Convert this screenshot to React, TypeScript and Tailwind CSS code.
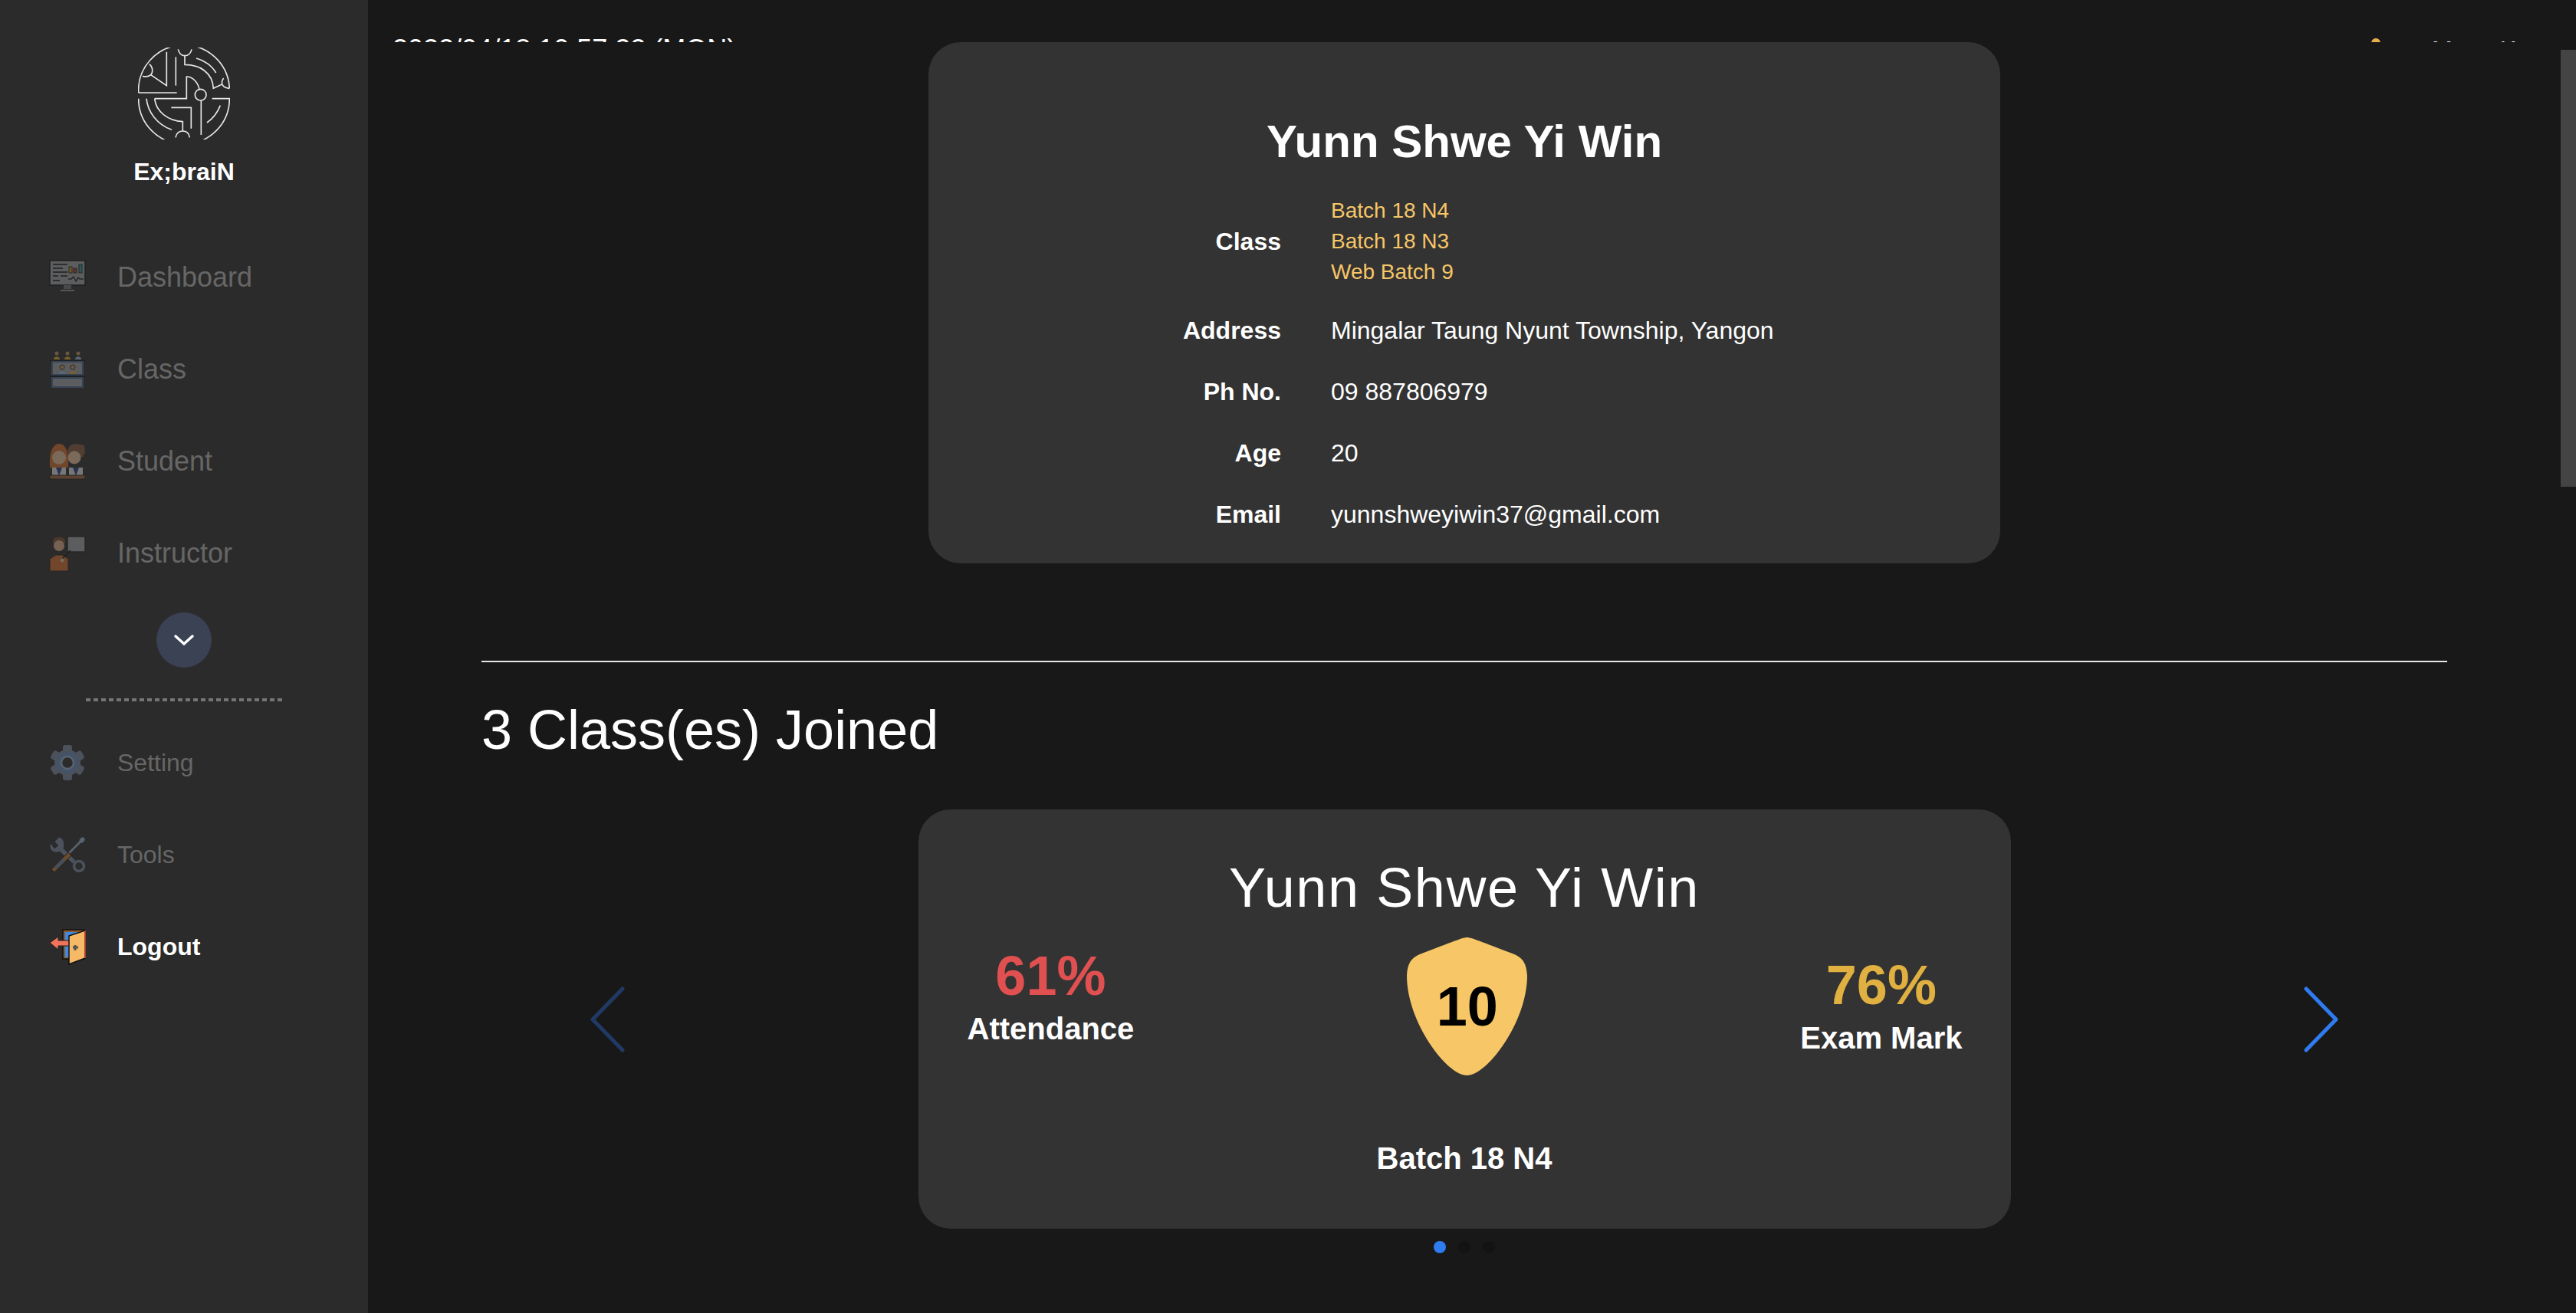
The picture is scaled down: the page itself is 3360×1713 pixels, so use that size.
import React from 'react';

const Logo = () => (
    <svg viewBox="120 68 360 360" className="w-[120px] h-[120px]" fill="none" stroke="#e6e6e6" strokeWidth="5">
        <path d="M122 245 A178 178 0 0 1 478 228 M122 245 H272" />
        <path d="M122 268 A178 178 0 0 0 478 268 H410" />
        <path d="M165 133 C182 150 178 172 165 178 C155 183 145 182 138 180" />
        <path d="M170 175 L232 217 V85" />
        <path d="M268 105 V217" />
        <path d="M277 75 C282 95 292 100 303 100 C315 100 326 92 330 75" />
        <path d="M303 100 V135 C360 135 412 165 415 228 L447 213" />
        <path d="M455 188 C442 205 447 224 478 228" />
        <path d="M348 110 C380 118 410 140 425 167" />
        <path d="M185 268 H310 V182 C335 182 355 205 360 232" />
        <circle cx="365" cy="253" r="22" />
        <path d="M367 275 V410" />
        <path d="M185 268 C190 320 240 355 295 358 V395" />
        <path d="M267 420 C270 405 280 395 295 395 C310 395 320 405 322 420" />
        <path d="M250 303 H328 V385" />
        <path d="M153 268 C158 320 195 370 252 390" />
        <path d="M442 295 C430 325 415 345 390 362" />
    </svg>
);

const DashboardIcon = () => (
    <svg viewBox="0 0 48 48" className="w-12 h-12 opacity-40">
        <rect x="1" y="2" width="46" height="32" fill="#a4a9ad" stroke="#111" strokeWidth="1.5" />
        <path d="M5 7 H24 M5 12 H18 M5 17 H24 M5 22 H12 M15 22 H24 M5 28 H14" stroke="#333" strokeWidth="1.8" />
        <rect x="26" y="10" width="4" height="8" fill="#d9a21b" stroke="#222" />
        <rect x="32" y="12" width="4" height="6" fill="#c0392b" stroke="#222" />
        <rect x="39" y="7" width="4" height="11" fill="#2aa198" stroke="#222" />
        <path d="M25 26 L29 26 L32 23 L35 29 L38 24 L40 26 L45 26" fill="none" stroke="#222" strokeWidth="1.5" />
        <path d="M19 34 H29 V39 H19 Z" fill="#777" />
        <path d="M15 41 H33" stroke="#999" strokeWidth="2" />
    </svg>
);

const ClassIcon = () => (
    <svg viewBox="0 0 48 48" className="w-12 h-12 opacity-40">
        <circle cx="10" cy="3" r="2.5" fill="#c9945f" />
        <circle cx="24" cy="3" r="2.5" fill="#c9945f" />
        <circle cx="38" cy="3" r="2.5" fill="#c9945f" />
        <path d="M6 11 C6 6 14 6 14 11 Z" fill="#e6b325" />
        <path d="M20 11 C20 6 28 6 28 11 Z" fill="#e6b325" />
        <path d="M34 11 C34 6 42 6 42 11 Z" fill="#9dc3e6" />
        <path d="M1 13 H47" stroke="#111" strokeWidth="2.5" />
        <rect x="4" y="14" width="40" height="17" fill="#a4a9ad" stroke="#4a6a9a" strokeWidth="2" />
        <circle cx="17" cy="21" r="3" fill="#d9a06b" stroke="#222" />
        <circle cx="31" cy="21" r="3" fill="#d9a06b" stroke="#222" />
        <path d="M13 30 C13 25 21 25 21 30 Z" fill="#9dc3e6" />
        <path d="M27 30 C27 25 35 25 35 30 Z" fill="#e6b325" />
        <path d="M1 33 H47" stroke="#111" strokeWidth="2.5" />
        <rect x="4" y="35" width="40" height="12" fill="#a4a9ad" stroke="#4a6a9a" strokeWidth="2" />
    </svg>
);

const StudentIcon = () => (
    <svg viewBox="0 0 48 48" className="w-12 h-12 opacity-40">
        <path d="M1 24 C1 6 8 1 13 1 C20 1 25 8 25 24 L25 32 H1 Z" fill="#d9702a" />
        <circle cx="13" cy="19" r="9" fill="#f2c6a0" />
        <path d="M24 12 C24 4 30 1 36 1 L46 3 L47 12 L44 18 H26 Z" fill="#8a5a3a" />
        <circle cx="33" cy="19" r="8.5" fill="#f2c6a0" />
        <path d="M4 32 H22 V43 H4 Z" fill="#e8e8e8" />
        <path d="M26 32 H44 V43 H26 Z" fill="#e8e8e8" />
        <path d="M9 32 H17 L13 43 Z" fill="#2c3e8a" />
        <path d="M31 32 H39 L35 43 Z" fill="#2c3e8a" />
        <rect x="1" y="42" width="46" height="5" fill="#a8663a" stroke="#222" />
    </svg>
);

const InstructorIcon = () => (
    <svg viewBox="0 0 48 48" className="w-12 h-12 opacity-40">
        <rect x="24" y="2" width="23" height="20" fill="#a4a9ad" stroke="#222" strokeWidth="1.5" />
        <path d="M37 22 V25" stroke="#222" strokeWidth="2" />
        <path d="M5 8 C5 1 21 1 21 8 L20 12 H6 Z" fill="#7a4f2f" />
        <circle cx="13" cy="14" r="7" fill="#e8b48a" />
        <path d="M1 47 V31 L9 26 H17 L25 31 V47 Z" fill="#d9702a" stroke="#222" />
        <path d="M15 33 L28 20" stroke="#111" strokeWidth="1.5" />
        <circle cx="17" cy="33" r="2.5" fill="#f2c6a0" />
    </svg>
);

const SettingIcon = () => (
    <svg viewBox="0 0 48 48" className="w-12 h-12">
        <g fill="#4b525c">
            <circle cx="24" cy="24" r="17" />
            <rect x="18" y="1" width="12" height="46" rx="3" />
            <rect x="18" y="1" width="12" height="46" rx="3" transform="rotate(60 24 24)" />
            <rect x="18" y="1" width="12" height="46" rx="3" transform="rotate(120 24 24)" />
        </g>
        <circle cx="24" cy="24" r="11.5" fill="none" stroke="#3d5578" strokeWidth="2" />
        <circle cx="24" cy="24" r="8" fill="#2b2b2b" stroke="#5a6370" strokeWidth="2.5" />
    </svg>
);

const ToolsIcon = () => (
    <svg viewBox="0 0 48 48" className="w-12 h-12">
        <path d="M13 1 L7 7 L12 12 L7 16 L2 9 C-1 15 3 22 11 21 L14 20 L31 36 L35 32 L19 16 C21 8 18 2 13 1 Z" fill="#4b525c" stroke="#222" strokeWidth="0.5" />
        <circle cx="39" cy="39" r="6.5" fill="#2b2b2b" stroke="#4b525c" strokeWidth="3.5" />
        <path d="M44 4 L24 24" stroke="#5a6370" strokeWidth="2.5" />
        <ellipse cx="43" cy="5" rx="3" ry="4" fill="#5a6370" transform="rotate(40 43 5)" />
        <path d="M25 21 L3 43 L7 47 L29 25 Z" fill="#6e4a2b" stroke="#222" />
        <path d="M20 30 L8 42" stroke="#34526f" strokeWidth="3" />
    </svg>
);

const LogoutIcon = () => (
    <svg viewBox="0 0 48 48" className="w-12 h-12">
        <rect x="18" y="2" width="28" height="38" fill="#8a5a2b" stroke="#111" strokeWidth="1.5" />
        <rect x="21" y="5" width="16" height="33" fill="#3f87e0" />
        <path d="M1 19 L12 11 V16 H28 V23 H12 V28 Z" fill="#f0735a" stroke="#222" strokeWidth="1" />
        <path d="M26 10 L47 3 V39 L26 47 Z" fill="#f6b966" stroke="#111" strokeWidth="1.5" />
        <path d="M47 3 V39" stroke="#d9483b" strokeWidth="1.5" />
        <path d="M31 25 H38 M34 22 V29" stroke="#555" strokeWidth="3" />
    </svg>
);

const NavItem = ({ icon, label, className }: { icon: React.ReactNode; label: string; className: string }) => (
    <div className="flex items-center h-[120px] pl-16 gap-[41px]">
        <div className="w-12 h-12 shrink-0">{icon}</div>
        <span className={className}>{label}</span>
    </div>
);

const InfoRow = ({ label, value, className }: { label: string; value: string; className: string }) => (
    <div className={`flex items-center gap-[65px] ${className}`}>
        <div className="w-[460px] text-right font-bold text-[32px] leading-10 text-white">{label}</div>
        <div className="text-[32px] leading-10 text-white">{value}</div>
    </div>
);

const App = () => {
    return (
        <div className="flex h-screen w-full overflow-hidden bg-[#181818] font-['Liberation_Sans',Arial,sans-serif]">
            {/* Sidebar */}
            <aside className="w-[480px] shrink-0 bg-[#2b2b2b] flex flex-col">
                <div className="flex flex-col items-center pt-[62px]">
                    <Logo />
                    <div className="mt-6 text-[32px] leading-9 font-bold text-white">Ex;braiN</div>
                </div>
                <div className="mt-[60px]">
                    <NavItem icon={<DashboardIcon />} label="Dashboard" className="text-[36px] text-[#666666]" />
                    <NavItem icon={<ClassIcon />} label="Class" className="text-[36px] text-[#666666]" />
                    <NavItem icon={<StudentIcon />} label="Student" className="text-[36px] text-[#666666]" />
                    <NavItem icon={<InstructorIcon />} label="Instructor" className="text-[36px] text-[#666666]" />
                </div>
                <div className="flex justify-center">
                    <div className="w-[72px] h-[72px] rounded-full bg-[#3a4254] flex items-center justify-center mt-[17px]">
                        <svg viewBox="0 0 28 16" className="w-7 h-4" fill="none" stroke="#ffffff" strokeWidth="3.5" strokeLinecap="round">
                            <path d="M3 3 L14 13 L25 3" />
                        </svg>
                    </div>
                </div>
                <div className="mt-10 mx-auto w-64 h-1 bg-[repeating-linear-gradient(90deg,#757575_0_6px,transparent_6px_10px)]" />
                <div className="mt-5">
                    <NavItem icon={<SettingIcon />} label="Setting" className="text-[32px] text-[#666666]" />
                    <NavItem icon={<ToolsIcon />} label="Tools" className="text-[32px] text-[#666666]" />
                    <NavItem icon={<LogoutIcon />} label="Logout" className="text-[32px] font-bold text-white" />
                </div>
            </aside>

            {/* Main */}
            <main className="relative flex-1 flex flex-col overflow-hidden">
                {/* Header, cut off by the scrolled content */}
                <div className="h-[55px] shrink-0 overflow-hidden flex justify-between pl-[32px] pr-[60px] pt-[45px]">
                    <div className="text-[36px] leading-[40px] text-white">2022/04/18 10:57:22 (MON)</div>
                    <div className="flex text-[32px] leading-[40px] text-white">
                        <svg viewBox="0 0 40 40" className="w-10 h-10 mr-[53px] -mt-[3px]" fill="#e8ae4c">
                            <path d="M20 8 C24 8 26 11 26 15 L34 20 H6 L14 15 C14 11 16 8 20 8 Z" />
                        </svg>
                        <span>Maun Ko</span>
                    </div>
                </div>

                {/* Scrollbar thumb */}
                <div className="absolute right-0 top-[65px] w-5 h-[570px] bg-[#444444]" />

                <div className="flex-1 overflow-hidden pr-5 flex flex-col items-center">
                    <section className="w-[1398px] h-[680px] shrink-0 rounded-[42px] bg-[#333333] pt-[100px]">
                        <h1 className="text-center text-[60px] leading-none font-bold text-white">Yunn Shwe Yi Win</h1>
                        <div className="mt-10">
                            <div className="flex items-center gap-[65px] mb-9">
                                <div className="w-[460px] text-right font-bold text-[32px] leading-10 text-white">Class</div>
                                <div className="text-[28px] leading-10 text-[#f6c667]">
                                    <div>Batch 18 N4</div>
                                    <div>Batch 18 N3</div>
                                    <div>Web Batch 9</div>
                                </div>
                            </div>
                            <InfoRow label="Address" value="Mingalar Taung Nyunt Township, Yangon" className="mb-10" />
                            <InfoRow label="Ph No." value="09 887806979" className="mb-10" />
                            <InfoRow label="Age" value="20" className="mb-10" />
                            <InfoRow label="Email" value="yunnshweyiwin37@gmail.com" className="" />
                        </div>
                    </section>

                    <div className="self-stretch mx-[148px] mt-[127px] h-0.5 shrink-0 bg-[#e5e5e5]" />
                    <h2 className="self-stretch mx-[148px] mt-12 text-[72px] leading-[80px] text-white">3 Class(es) Joined</h2>

                    {/* Carousel */}
                    <div className="self-stretch mt-[64px] px-[290px] flex items-center justify-between">
                        <svg viewBox="0 0 45 86" className="w-[45px] h-[86px] opacity-35" fill="none" stroke="#2f7bf0" strokeWidth="5" strokeLinecap="round" strokeLinejoin="round">
                            <path d="M42 3 L3 43 L42 83" />
                        </svg>
                        <div className="w-[1425px] h-[547px] rounded-[42px] bg-[#333333] pt-[66px] flex flex-col">
                            <div className="text-center text-[72px] leading-none tracking-[1.6px] text-white">Yunn Shwe Yi Win</div>
                            <div className="mt-[29px] pl-[64px] pr-[63px] flex justify-between items-start">
                                <div className="pt-[14px] flex flex-col items-center">
                                    <div className="text-[72px] leading-none font-bold text-[#e05050]">61%</div>
                                    <div className="mt-[13px] text-[40px] leading-10 font-bold text-white">Attendance</div>
                                </div>
                                <div className="relative w-[157px] h-[180px] flex items-center justify-center">
                                    <svg viewBox="0 0 157 180" className="absolute inset-0 w-[157px] h-[180px]" fill="#f6c667">
                                        <path d="M78.5 0 C84 0 90 3 135 20 C150 25 156 32 157 50 C157 110 105 180 78.5 180 C52 180 0 110 0 50 C1 32 7 25 22 20 C67 3 73 0 78.5 0 Z" />
                                    </svg>
                                    <span className="relative text-[72px] leading-none font-bold text-black">10</span>
                                </div>
                                <div className="pt-[26px] flex flex-col items-center">
                                    <div className="text-[72px] leading-none font-bold text-[#e0b040]">76%</div>
                                    <div className="mt-[13px] text-[40px] leading-10 font-bold text-white">Exam Mark</div>
                                </div>
                            </div>
                            <div className="mt-[88px] text-center text-[40px] leading-10 font-bold text-white">Batch 18 N4</div>
                        </div>
                        <svg viewBox="0 0 45 86" className="w-[45px] h-[86px]" fill="none" stroke="#2f7bf0" strokeWidth="5" strokeLinecap="round" strokeLinejoin="round">
                            <path d="M3 3 L42 43 L3 83" />
                        </svg>
                    </div>

                    {/* Pagination */}
                    <div className="mt-4 flex gap-4">
                        <div className="w-4 h-4 rounded-full bg-[#2f7bf0]" />
                        <div className="w-4 h-4 rounded-full bg-black/20" />
                        <div className="w-4 h-4 rounded-full bg-black/20" />
                    </div>
                </div>
            </main>
        </div>
    );
};

export default App;
